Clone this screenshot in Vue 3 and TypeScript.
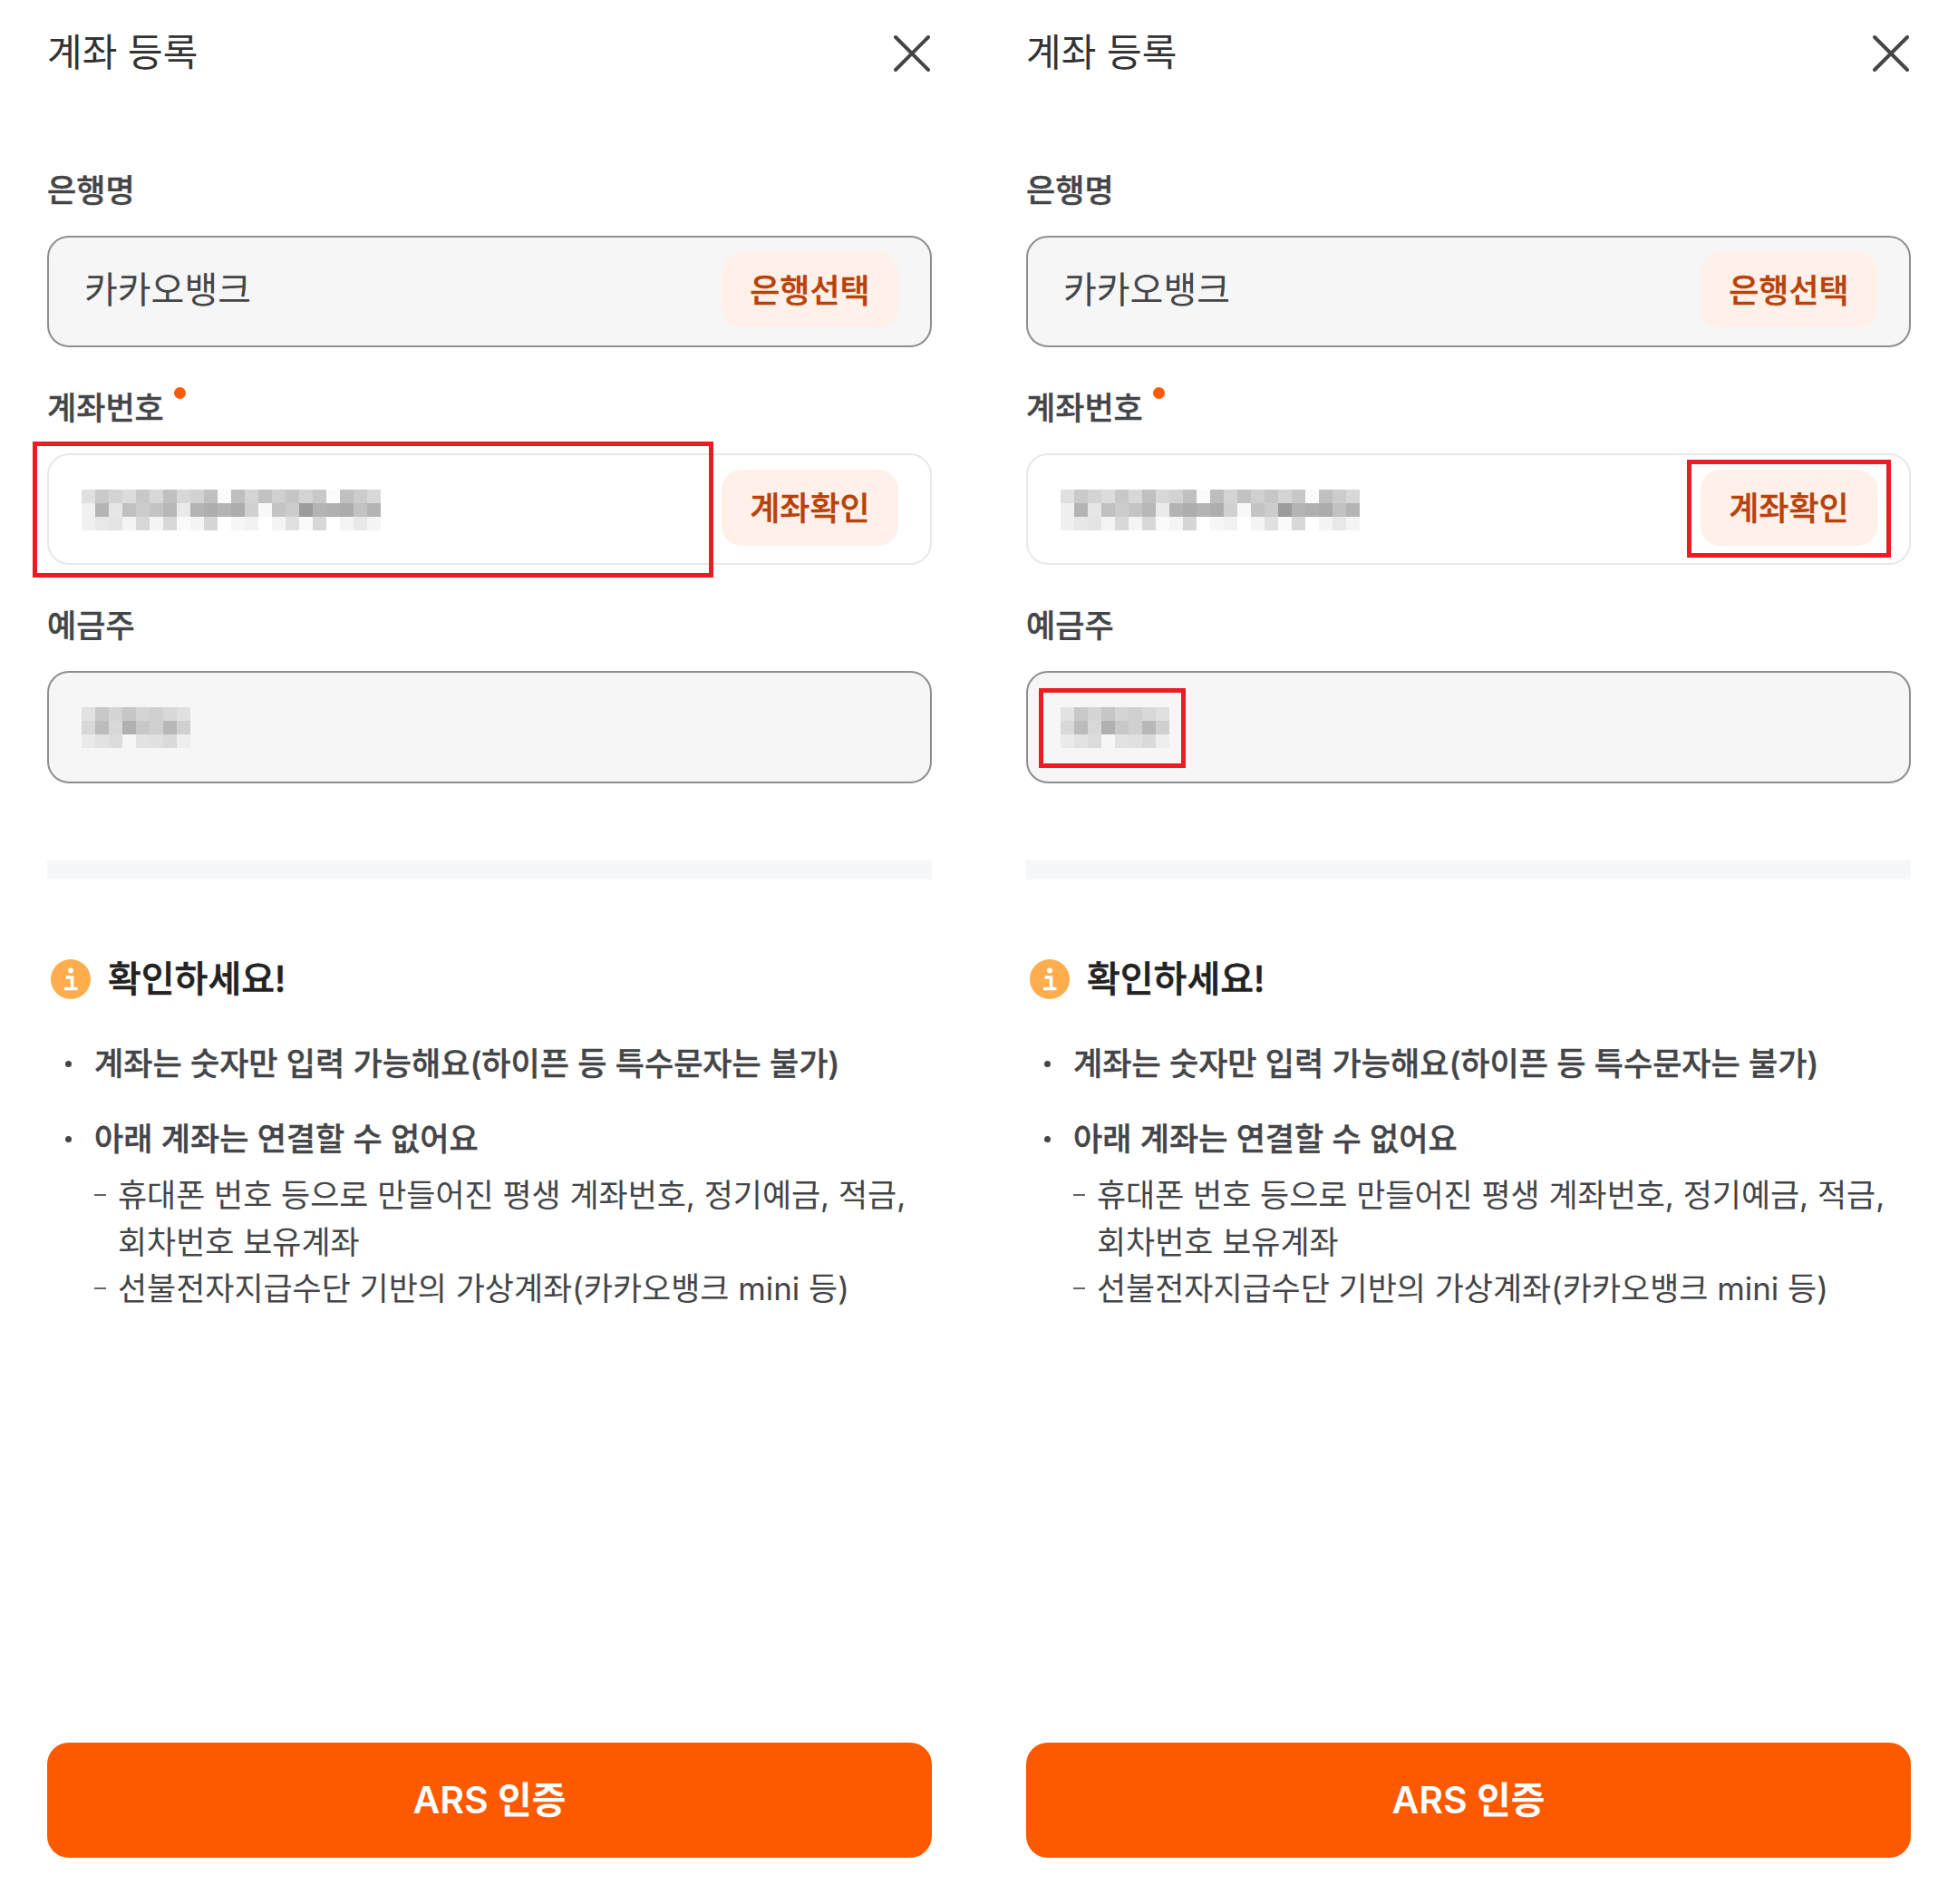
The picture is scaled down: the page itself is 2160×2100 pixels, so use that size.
<script setup lang="ts">
const accountCells: string[][] = [
  ['e0','c9','d4','dc','c8','d8','c0','d8','d2','c0','fb','be','d4','c2','d0','c6','d4','c8','fb','c0','cc','d8'],
  ['f0','b4','e6','c0','cc','c4','b8','ea','b4','ae','b4','ae','d0','f8','c4','cc','9c','b4','b0','ac','c2','b4'],
  ['f0','e8','e4','f4','d8','f4','d8','fa','f4','d6','ff','f6','f2','ff','f4','e0','fa','d8','ff','f4','e8','f4'],
]
const ownerCells: string[][] = [
  ['e2','c8','d4','c6','d4','d0','d8','e0'],
  ['d8','bc','d8','b0','c8','d0','b8','d0'],
  ['ea','e2','dc','f6','e2','e0','da','ee'],
]
const flat = (rows: string[][]) => rows.flat().map((c) => `#${c}${c}${c}`)
const panels = [{ mark: 'account' }, { mark: 'verify' }]
</script>

<template>
  <div class="page">
    <section v-for="panel in panels" :key="panel.mark" class="panel">
      <header class="head">
        <h1 class="title">계좌 등록</h1>
        <svg class="close" width="40" height="40" viewBox="0 0 40 40" fill="none">
          <path d="M2 2 L38 38 M38 2 L2 38" stroke="#444548" stroke-width="4" stroke-linecap="round" />
        </svg>
      </header>

      <div class="fields">
        <div class="field">
          <div class="label">은행명</div>
          <div class="box box-filled">
            <span class="value">카카오뱅크</span>
            <span class="chip">은행선택</span>
          </div>
        </div>

        <div class="field">
          <div class="label">계좌번호<i class="dot"></i></div>
          <div class="box box-open">
            <div class="mosaic mosaic-account">
              <span v-for="(c, i) in flat(accountCells)" :key="i" :style="{ background: c }"></span>
            </div>
            <span class="chip">계좌확인</span>
          </div>
        </div>

        <div class="field">
          <div class="label">예금주</div>
          <div class="box box-filled box-tall">
            <div class="mosaic mosaic-owner">
              <span v-for="(c, i) in flat(ownerCells)" :key="i" :style="{ background: c }"></span>
            </div>
          </div>
        </div>
      </div>

      <div class="divider"></div>

      <div class="notice">
        <svg class="info" width="44" height="44" viewBox="0 0 44 44">
          <circle cx="22" cy="22" r="22" fill="#ffad4d" />
          <circle cx="22" cy="12.5" r="3" fill="#fff" />
          <path d="M16.5 20 H23.5 V32 M15 32.5 H29.5" fill="none" stroke="#fff" stroke-width="3.6" />
        </svg>
        <h2 class="notice-title">확인하세요!</h2>
      </div>

      <ul class="rules">
        <li class="rule">계좌는 숫자만 입력 가능해요(하이픈 등 특수문자는 불가)</li>
        <li class="rule">
          아래 계좌는 연결할 수 없어요
          <ul class="subrules">
            <li>휴대폰 번호 등으로 만들어진 평생 계좌번호, 정기예금, 적금, 회차번호 보유계좌</li>
            <li>선불전자지급수단 기반의 가상계좌(카카오뱅크 mini 등)</li>
          </ul>
        </li>
      </ul>

      <button class="cta" type="button">ARS 인증</button>

      <template v-if="panel.mark === 'account'">
        <div class="mark mark-account"></div>
      </template>
      <template v-else>
        <div class="mark mark-check"></div>
        <div class="mark mark-owner"></div>
      </template>
    </section>
  </div>
</template>

<style scoped>
.page {
  display: flex;
  gap: 104px;
  padding: 0 52px;
  width: 2160px;
  height: 2100px;
  box-sizing: border-box;
  background: #fff;
  font-family: Inter, "Noto Sans CJK KR", "Noto Sans", sans-serif;
  color: #444548;
}
.panel {
  position: relative;
  width: 976px;
  display: flex;
  flex-direction: column;
  padding-bottom: 51px;
  box-sizing: border-box;
}
.head {
  height: 114px;
  padding-top: 29px;
  box-sizing: border-box;
  display: flex;
  justify-content: space-between;
  align-items: flex-start;
}
.title {
  margin: 0;
  font-size: 42px;
  font-weight: 400;
  line-height: 58px;
  color: #333;
}
.close {
  margin-top: 10px;
  margin-right: 2px;
}
.fields {
  margin-top: 71px;
  display: flex;
  flex-direction: column;
  gap: 42px;
}
.label {
  position: relative;
  height: 48px;
  line-height: 50px;
  margin-bottom: 27px;
  font-size: 35px;
  font-weight: 500;
  -webkit-text-stroke: 0.4px #444548;
  color: #444548;
}
.dot {
  position: absolute;
  left: 140px;
  top: 2px;
  width: 13px;
  height: 13px;
  border-radius: 50%;
  background: #ff5a05;
}
.box {
  height: 123px;
  box-sizing: border-box;
  border-radius: 24px;
  display: flex;
  align-items: center;
  justify-content: space-between;
  padding: 0 35px 0 36px;
}
.box-tall {
  height: 124px;
}
.box-filled {
  background: #f6f6f6;
  border: 2px solid #8e8e93;
}
.box-open {
  background: #fff;
  border: 2px solid #e8e8ea;
}
.value {
  margin: -4px 0 0 3px;
  font-size: 40px;
  color: #444548;
  line-height: 56px;
}
.chip {
  width: 195px;
  height: 84px;
  margin-top: -3px;
  padding-bottom: 5px;
  box-sizing: border-box;
  border-radius: 22px;
  background: #fff1ea;
  color: #b8420a;
  font-size: 36px;
  font-weight: 500;
  -webkit-text-stroke: 0.4px #b8420a;
  display: flex;
  align-items: center;
  justify-content: center;
}
.mosaic {
  display: grid;
  grid-auto-rows: 15px;
  grid-template-columns: repeat(auto-fill, 15px);
  margin-top: 1px;
}
.mosaic-account {
  width: 330px;
}
.mosaic-owner {
  width: 120px;
}
.divider {
  margin-top: 85px;
  height: 21px;
  background: #f6f7f9;
}
.notice {
  margin-top: 88px;
  padding-left: 4px;
  display: flex;
  align-items: center;
  gap: 19px;
  height: 44px;
}
.notice-title {
  margin: 0;
  font-size: 40px;
  font-weight: 500;
  -webkit-text-stroke: 0.6px #222;
  color: #222;
  line-height: 44px;
}
.rules {
  list-style: none;
  margin: 45px 0 0;
  padding: 0 0 0 52px;
}
.rule {
  position: relative;
  font-size: 35px;
  font-weight: 500;
  -webkit-text-stroke: 0.4px #444548;
  line-height: 52px;
  color: #444548;
  margin-bottom: 31px;
}
.rule::before {
  content: "";
  position: absolute;
  left: -32px;
  top: 23px;
  width: 7px;
  height: 7px;
  border-radius: 50%;
  background: #444548;
}
.subrules {
  list-style: none;
  margin: 11px 0 0;
  padding: 0 0 0 26px;
  font-size: 34.9px;
  font-weight: 400;
  -webkit-text-stroke: 0;
}
.subrules li {
  position: relative;
  line-height: 51.5px;
}
.subrules li::before {
  content: "";
  position: absolute;
  left: -26px;
  top: 24px;
  width: 13px;
  height: 2px;
  background: #666;
}
.cta {
  margin-top: auto;
  height: 127px;
  border: 0;
  border-radius: 24px;
  background: #ff5900;
  color: #fff;
  font-family: inherit;
  font-size: 41px;
  font-weight: 600;
  padding: 0 0 8px;
}
.mark {
  position: absolute;
  box-sizing: border-box;
  border: 5px solid #ed1c24;
  pointer-events: none;
}
.mark-account {
  left: -16px;
  top: 487px;
  width: 751px;
  height: 150px;
}
.mark-check {
  left: 729px;
  top: 507px;
  width: 225px;
  height: 108px;
}
.mark-owner {
  left: 14px;
  top: 759px;
  width: 162px;
  height: 88px;
}
</style>
